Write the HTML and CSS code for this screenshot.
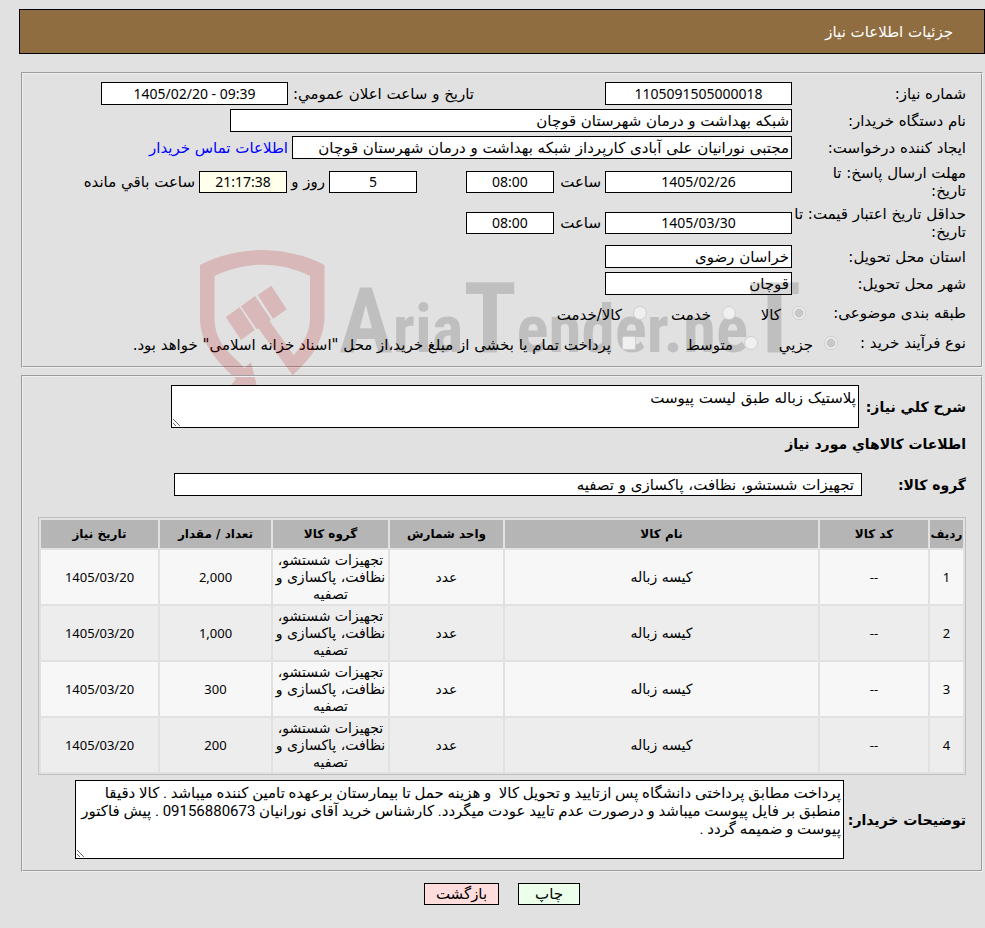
FILE: index.html
```html
<!DOCTYPE html>
<html lang="fa" dir="rtl">
<head>
<meta charset="utf-8">
<title>جزئیات اطلاعات نیاز</title>
<link rel="stylesheet" href="styles.css">
</head>
<body>
<header class="title-bar"><h1>جزئیات اطلاعات نیاز</h1></header>
<form class="page">
  <fieldset class="panel need">
    <div class="row">
      <label class="name" for="num">شماره نیاز:</label>
      <input class="box medium center" id="num" value="1105091505000018" readonly>
      <label class="text announce" for="pub">تاريخ و ساعت اعلان عمومي:</label>
      <input class="box medium center" id="pub" dir="ltr" value="1405/02/20 - 09:39" readonly>
    </div>
    <div class="row">
      <label class="name" for="org">نام دستگاه خریدار:</label>
      <input class="box org" id="org" value="شبکه بهداشت و درمان شهرستان قوچان" readonly>
    </div>
    <div class="row">
      <label class="name" for="creator">ایجاد کننده درخواست:</label>
      <input class="box creator" id="creator" value="مجتبی نورانیان علی آبادی کارپرداز شبکه بهداشت و درمان شهرستان قوچان" readonly>
      <a class="text" href="#">اطلاعات تماس خریدار</a>
    </div>
    <div class="row tall">
      <label class="name" for="due">مهلت ارسال پاسخ: تا<br>تاریخ:</label>
      <input class="box medium center" id="due" value="1405/02/26" readonly>
      <label class="text hour" for="dueh">ساعت</label>
      <input class="box small center" id="dueh" value="08:00" readonly>
      <input class="box small center days" id="days" value="5" readonly aria-label="روز">
      <label class="text day" for="days">روز و</label>
      <input class="box small center remaining" id="left" value="21:17:38" readonly>
      <label class="text" for="left">ساعت باقي مانده</label>
    </div>
    <div class="row tall">
      <label class="name" for="valid">حداقل تاریخ اعتبار قیمت: تا<br>تاریخ:</label>
      <input class="box medium center" id="valid" value="1405/03/30" readonly>
      <label class="text hour" for="validh">ساعت</label>
      <input class="box small center" id="validh" value="08:00" readonly>
    </div>
    <div class="row">
      <label class="name" for="prov">استان محل تحویل:</label>
      <input class="box medium" id="prov" value="خراسان رضوی" readonly>
    </div>
    <div class="row">
      <label class="name" for="city">شهر محل تحویل:</label>
      <input class="box medium" id="city" value="قوچان" readonly>
    </div>
    <div class="row options kinds">
      <span class="name">طبقه بندی موضوعی:</span>
      <input type="radio" name="kind" id="k1" checked disabled><label for="k1">کالا</label>
      <input type="radio" name="kind" id="k2" disabled><label for="k2">خدمت</label>
      <input type="radio" name="kind" id="k3" disabled><label for="k3">کالا/خدمت</label>
    </div>
    <div class="row options process">
      <span class="name">نوع فرآیند خرید :</span>
      <input type="radio" name="proc" id="p1" checked disabled><label for="p1">جزيي</label>
      <input type="radio" name="proc" id="p2" disabled><label for="p2">متوسط</label>
      <input type="checkbox" id="bond" disabled><label for="bond">پرداخت تمام یا بخشی از مبلغ خرید،از محل "اسناد خزانه اسلامی" خواهد بود.</label>
    </div>
    <svg class="watermark" viewBox="195 240 620 150" aria-hidden="true">
      <path fill="#b40000" fill-opacity=".18" d="M200 265C240 245 285 245 324.500 265V318C323 345 308 361 292.700 375.300L258.300 328.300 256.700 329.300 241 306.300 255 296 270.700 319.300 269.700 321.300 293.700 355.300C305 342 310 330 310 318V276C280 261 245 261 214.500 276V318C215 345 231 353 244.500 368L251 362 257 386.500 231 385 236 379C219 363 200 345 200 318ZM225.700 317L239.700 307.300 254.700 330 241 340ZM257.700 295L271.300 285.700 286.700 309.300 273 318.700Z"/>
      <text class="brand" x="339" y="352"><tspan class="initial">A</tspan>ria<tspan class="big">T</tspan>ender.ne<tspan class="big">T</tspan></text>
    </svg>
  </fieldset>

  <fieldset class="panel goods">
    <div class="row">
      <label class="strong desc-name" for="desc">شرح کلي نیاز:</label>
      <textarea class="box desc" id="desc" readonly>پلاستیک زباله طبق لیست پیوست</textarea>
    </div>
    <h2 class="strong">اطلاعات کالاهاي مورد نیاز</h2>
    <div class="row">
      <label class="strong group-name" for="group">گروه کالا:</label>
      <input class="box group" id="group" value="تجهیزات شستشو، نظافت، پاکسازی و تصفیه" readonly>
    </div>
    <table class="items">
      <colgroup><col class="c-row"><col class="c-code"><col><col class="c-unit"><col class="c-group"><col class="c-qty"><col class="c-date"></colgroup>
      <thead><tr><th>ردیف</th><th>کد کالا</th><th>نام کالا</th><th>واحد شمارش</th><th>گروه کالا</th><th>تعداد / مقدار</th><th>تاریخ نیاز</th></tr></thead>
      <tbody>
        <tr><td class="num">1</td><td class="num">--</td><td>کیسه زباله</td><td>عدد</td><td>تجهیزات شستشو، نظافت، پاکسازی و تصفیه</td><td class="num">2,000</td><td class="num">1405/03/20</td></tr>
        <tr><td class="num">2</td><td class="num">--</td><td>کیسه زباله</td><td>عدد</td><td>تجهیزات شستشو، نظافت، پاکسازی و تصفیه</td><td class="num">1,000</td><td class="num">1405/03/20</td></tr>
        <tr><td class="num">3</td><td class="num">--</td><td>کیسه زباله</td><td>عدد</td><td>تجهیزات شستشو، نظافت، پاکسازی و تصفیه</td><td class="num">300</td><td class="num">1405/03/20</td></tr>
        <tr><td class="num">4</td><td class="num">--</td><td>کیسه زباله</td><td>عدد</td><td>تجهیزات شستشو، نظافت، پاکسازی و تصفیه</td><td class="num">200</td><td class="num">1405/03/20</td></tr>
      </tbody>
    </table>
    <div class="row">
      <label class="strong" for="notes">توضیحات خریدار:</label>
      <textarea class="box notes" id="notes" readonly>پرداخت مطابق پرداختی دانشگاه پس ازتایید و تحویل کالا  و هزینه حمل تا بیمارستان برعهده تامین کننده میباشد . کالا دقیقا منطبق بر فایل پیوست میباشد و درصورت عدم تایید عودت میگردد. کارشناس خرید آقای نورانیان 09156880673 . پیش فاکتور پیوست و ضمیمه گردد .</textarea>
    </div>
  </fieldset>

  <div class="actions">
    <button type="button" class="print">چاپ</button>
    <button type="button" class="back">بازگشت</button>
  </div>
</form>
</body>
</html>
```
FILE: styles.css
```css
* { box-sizing: border-box; }

body {
  margin: 0;
  padding: 9px 0 0 19px;
  background: #e1e1e1;
  color: #000;
  font: 15px/18px "DejaVu Sans", sans-serif;
}

.title-bar {
  display: flex;
  align-items: center;
  height: 45px;
  padding: 0 31px;
  border: 1px solid #000;
  background: #8f6d41;
  color: #fff;
}

.title-bar h1 { margin: 0; font-size: 15px; font-weight: 400; }

.page { margin: 18px 2px 0; }

.panel {
  position: relative;
  min-width: 0;
  margin: 0 0 7px;
  padding: 8px 15px 7px;
  border: 2px groove #f0f0f0;
}

.row { display: flex; align-items: center; gap: 4px; margin-bottom: 4px; }

.name { flex: none; width: 170px; white-space: nowrap; }

.text { flex: none; white-space: nowrap; }

a { color: #00f; text-decoration: none; }

.box {
  height: 23px;
  min-width: 0;
  margin: 0;
  padding: 0 2px;
  border: 1px solid #000;
  border-radius: 0;
  background: #fff;
  color: #000;
  font: inherit;
}

.center { text-align: center; font: 14px "Noto Sans", sans-serif; }
.medium { width: 187px; }
.small { width: 88px; }
.org { width: 562px; }
.creator { width: 500px; }
.remaining { background: #ffffeb; }
.announce { width: 182px; margin-right: 127px; }
.hour { width: 43px; }
.day { width: 34px; }
.days { margin-right: 45px; }
.tall { min-height: 37px; }
.tall .box { height: 22px; }

.options { gap: 11px; height: 27px; margin-bottom: 3px; }
.options label { padding-top: 4px; white-space: nowrap; }
.options .name { margin-left: -11px; }
.kinds .name { width: 160px; }
.process .name { width: 128px; }
.kinds label { width: 20px; margin-left: 14px; }
.kinds label[for="k2"] { width: 39px; }
.process label { width: 34px; margin-left: 10px; }
.process label[for="p2"] { width: 44px; margin-left: 42px; }

.options input {
  position: relative;
  z-index: 1;
  flex: none;
  appearance: none;
  width: 14px;
  height: 14px;
  margin: 0;
  border: 1px solid #cfcfcf;
  border-radius: 50%;
  background: #f0f0f0;
}

.options input:checked { background: radial-gradient(circle, #c8c8c8 4px, #f0f0f0 5px); }
.options input[type="checkbox"] { border-radius: 2px; }

.watermark {
  position: absolute;
  top: 166px;
  left: 172px;
  width: 620px;
  height: 150px;
  pointer-events: none;
  direction: ltr;
}

.brand { font: 700 67px "Roboto Condensed", "Liberation Sans Narrow", "Liberation Sans", sans-serif; fill: #000; fill-opacity: .15; }
.initial { font-size: 90px; }
.big { font-size: 98px; }

.strong { flex: none; margin: 0; font-size: 14px; font-weight: 700; white-space: nowrap; }
h2.strong { padding: 3px 0 20px; }

textarea.box { padding: 3px 2px; overflow: hidden; resize: both; }
.desc-name { width: 103px; }
.desc { width: 688px; height: 43px; }
.group-name { width: 100px; }
.group { width: 688px; padding: 0 7px; }
textarea.notes {
  width: 769px;
  height: 79px;
  padding-left: 0;
  font-family: Roboto, "DejaVu Sans", sans-serif;
}

.items {
  width: 100%;
  margin: 21px 0 5px;
  border: 1px solid #bfbfbf;
  border-spacing: 2px;
  table-layout: fixed;
  font-size: 14px;
  line-height: 17px;
  text-align: center;
}

.c-row { width: 33px; }
.c-code { width: 108px; }
.c-unit { width: 113px; }
.c-group { width: 115px; }
.c-qty { width: 111px; }
.c-date { width: 117px; }

th { height: 28px; padding: 0; background: #b5b5b5; font-size: 12px; white-space: nowrap; }
td { height: 54px; padding: 1px; background: #ededed; }
tbody tr:nth-child(odd) td { background: #f7f7f7; }
.num { font: 13px "Noto Sans", sans-serif; }

.actions { display: flex; justify-content: center; gap: 19px; margin-top: 11px; }

button {
  height: 22px;
  padding: 0 10px;
  border: 1px solid #000;
  border-radius: 0;
  color: #000;
  font: inherit;
  line-height: 18px;
}

.print { width: 62px; background: #ebffeb; }
.back { width: 75px; background: #fdd; }
```
